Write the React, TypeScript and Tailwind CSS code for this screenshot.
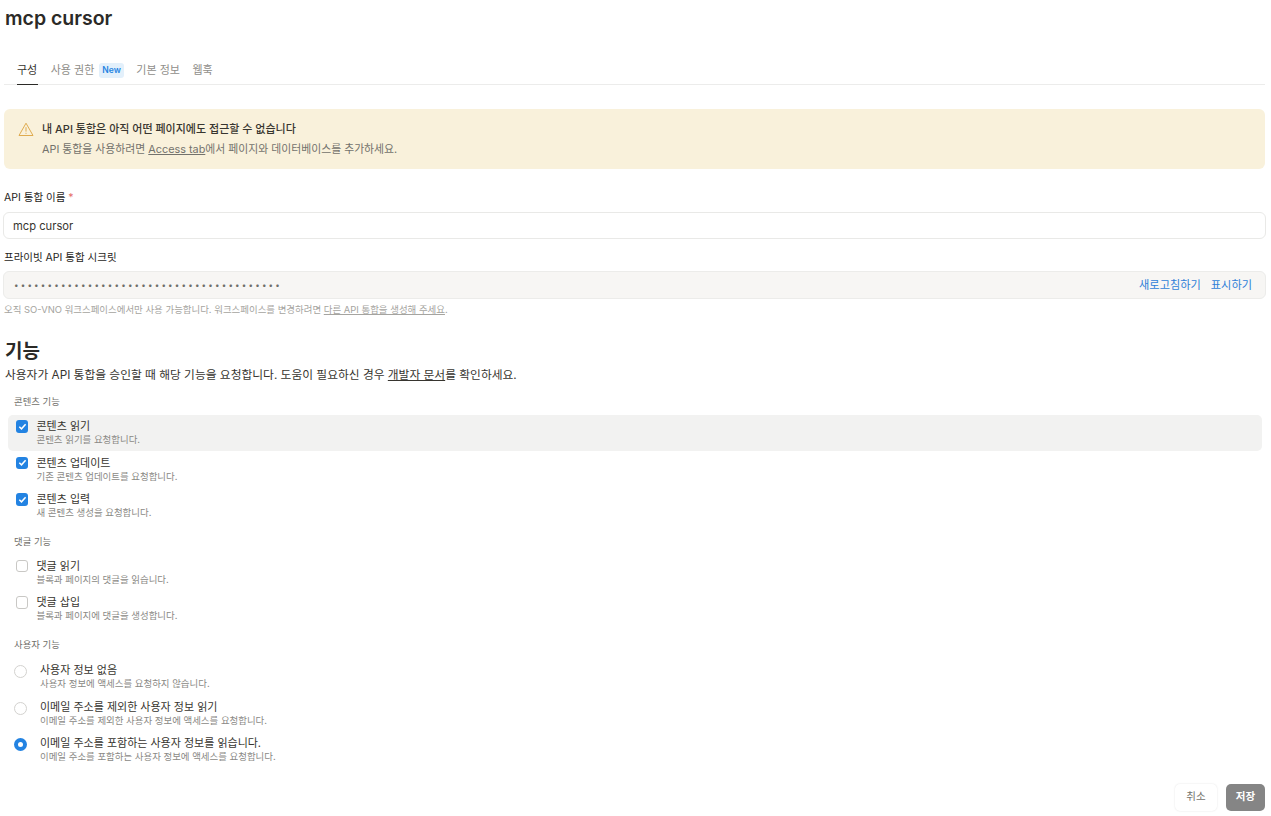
import React from "react";

const font = { fontFamily: '"Inter","Noto Sans CJK KR",sans-serif' };

function Check({ on }: { on: boolean }) {
  return on ? (
    <span className="mt-[1px] flex h-[12.5px] w-[12px] shrink-0 items-center justify-center rounded-[3px] bg-[#2383e2]">
      <svg width="9" height="9" viewBox="0 0 9 9" fill="none">
        <path d="M1.3 4.7 3.5 6.8 7.6 2.2" stroke="#fff" strokeWidth="1.5" />
      </svg>
    </span>
  ) : (
    <span className="mt-[1px] h-[12.5px] w-[12px] shrink-0 rounded-[3px] border border-[#c9c8c5] bg-white" />
  );
}

function Radio({ on }: { on: boolean }) {
  return on ? (
    <span className="mt-[2px] flex h-[13px] w-[13px] shrink-0 items-center justify-center rounded-full bg-[#2383e2]">
      <span className="h-[5px] w-[5px] rounded-full bg-white" />
    </span>
  ) : (
    <span className="mt-[2px] h-[13px] w-[13px] shrink-0 rounded-full border border-[#d3d2cf] bg-white" />
  );
}

function Row({ title, desc, on, hover, radio }: { title: string; desc: string; on: boolean; hover?: boolean; radio?: boolean }) {
  return (
    <div className={`mb-[0.5px] flex h-[36px] items-start rounded-[5px] pt-[4px] ${radio ? "pl-[6px]" : "pl-[8px]"} ${hover ? "bg-[#f2f2f1]" : ""}`}>
      {radio ? <Radio on={on} /> : <Check on={on} />}
      <div className={radio ? "ml-[13px]" : "ml-[8.5px]"}>
        <div className="text-[11px] leading-[14px] text-[#37352f]">{title}</div>
        <div className="mt-[1px] text-[9.45px] leading-[12px] text-[#8a8985]">{desc}</div>
      </div>
    </div>
  );
}

function Group({ label, children }: { label: string; children: React.ReactNode }) {
  return (
    <div>
      <div className="pl-[6px] text-[9.4px] leading-[14px] text-[#6f6e69]">{label}</div>
      {children}
    </div>
  );
}

export default function App() {
  return (
    <div style={font} className="h-[816px] w-[1271px] overflow-hidden bg-white pl-[4px] pr-[6px] text-[#37352f]">
      <h1 className="ml-[1px] pt-[6px] text-[19.5px] font-semibold leading-[24px] text-[#2b2a27]">mcp cursor</h1>

      <div className="mt-[31px] flex h-[24px] items-start gap-[12.5px] border-b border-[#ececeb] pl-[13px] text-[11px] leading-[18px] text-[#8f8e8a]">
        <span className="h-[24px] border-b border-[#2b2a27] pr-[1px] text-[#37352f]">구성</span>
        <span className="flex items-center gap-[5px]">
          사용 권한
          <span className="rounded-[3px] bg-[#e3f0fb] px-[3px] text-[8.5px] font-semibold leading-[15px] text-[#2383e2]">New</span>
        </span>
        <span>기본 정보</span>
        <span>웹훅</span>
      </div>

      <div className="mt-[24px] flex h-[60px] items-start rounded-[6px] bg-[#f9f1db] pl-[14px] pt-[12px]">
        <svg width="16" height="15" viewBox="0 0 16 15" fill="none" className="mr-[8px] mt-[1px]">
          <path d="M8 1.2 15 13.5H1L8 1.2Z" stroke="#dfab4f" strokeWidth="1" strokeLinejoin="round" />
          <path d="M8 5.2v4.4M8 10.8v1" stroke="#dfab4f" strokeWidth="1" />
        </svg>
        <div>
          <div className="text-[11px] font-medium leading-[17px] text-[#37352f]">내 API 통합은 아직 어떤 페이지에도 접근할 수 없습니다</div>
          <div className="mt-[3px] text-[10.85px] leading-[17px] text-[#73726c]">
            API 통합을 사용하려면 <span className="underline">Access tab</span>에서 페이지와 데이터베이스를 추가하세요.
          </div>
        </div>
      </div>

      <div className="mt-[21px] text-[10.5px] leading-[16px] text-[#1f1e1b]">
        API 통합 이름 <span className="text-[#e56b6b]">*</span>
      </div>
      <div className="mx-[-1px] mt-[6px] flex h-[27px] items-center rounded-[6px] border border-[#e9e9e7] pl-[9px] pt-[1px] text-[11.2px] text-[#37352f]">mcp cursor</div>

      <div className="mt-[11px] text-[10.5px] leading-[16px] text-[#1f1e1b]">프라이빗 API 통합 시크릿</div>
      <div className="mx-[-1px] mt-[5px] flex h-[28px] items-center justify-between rounded-[6px] border border-[#ececea] bg-[#f7f6f4] pl-[10px] pr-[13px]">
        <span className="text-[8px] tracking-[2.2px] text-[#6f6e69]">••••••••••••••••••••••••••••••••••••••••</span>
        <span className="flex gap-[10px] text-[11.2px] text-[#2f7fd8]">
          <span>새로고침하기</span>
          <span>표시하기</span>
        </span>
      </div>
      <div className="mt-[4px] text-[9.45px] leading-[14px] text-[#a5a4a0]">
        오직 SO-VNO 워크스페이스에서만 사용 가능합니다. 워크스페이스를 변경하려면 <span className="underline">다른 API 통합을 생성해 주세요</span>.
      </div>

      <h2 className="ml-[1px] mt-[23px] text-[19px] font-semibold leading-[24px] text-[#2b2a27]">기능</h2>
      <p className="ml-[1px] mt-[3px] text-[11.75px] leading-[16px] text-[#37352f]">
        사용자가 API 통합을 승인할 때 해당 기능을 요청합니다. 도움이 필요하신 경우 <span className="underline">개발자 문서</span>를 확인하세요.
      </p>

      <div className="mt-[12px] pl-[4px] pr-[3px]">
        <Group label="콘텐츠 기능">
          <div className="mt-[6px]">
            <Row hover on title="콘텐츠 읽기" desc="콘텐츠 읽기를 요청합니다." />
            <Row on title="콘텐츠 업데이트" desc="기존 콘텐츠 업데이트를 요청합니다." />
            <Row on title="콘텐츠 입력" desc="새 콘텐츠 생성을 요청합니다." />
          </div>
        </Group>
        <div className="mt-[10.5px]">
          <Group label="댓글 기능">
            <div className="mt-[6px]">
              <Row on={false} title="댓글 읽기" desc="블록과 페이지의 댓글을 읽습니다." />
              <Row on={false} title="댓글 삽입" desc="블록과 페이지에 댓글을 생성합니다." />
            </div>
          </Group>
        </div>
        <div className="mt-[11px]">
          <Group label="사용자 기능">
            <div className="mt-[7px]">
              <Row radio on={false} title="사용자 정보 없음" desc="사용자 정보에 액세스를 요청하지 않습니다." />
              <Row radio on={false} title="이메일 주소를 제외한 사용자 정보 읽기" desc="이메일 주소를 제외한 사용자 정보에 액세스를 요청합니다." />
              <Row radio on title="이메일 주소를 포함하는 사용자 정보를 읽습니다." desc="이메일 주소를 포함하는 사용자 정보에 액세스를 요청합니다." />
            </div>
          </Group>
        </div>
      </div>

      <div className="mt-[15.5px] flex justify-end gap-[9px]">
        <span className="flex h-[27px] w-[42px] items-center justify-center rounded-[5px] bg-white text-[10.5px] text-[#73726c] shadow-[0_0_2px_rgba(0,0,0,0.12)]">취소</span>
        <span className="flex h-[27px] w-[39px] items-center justify-center rounded-[5px] bg-[#858585] text-[10.5px] font-semibold text-white">저장</span>
      </div>
    </div>
  );
}
